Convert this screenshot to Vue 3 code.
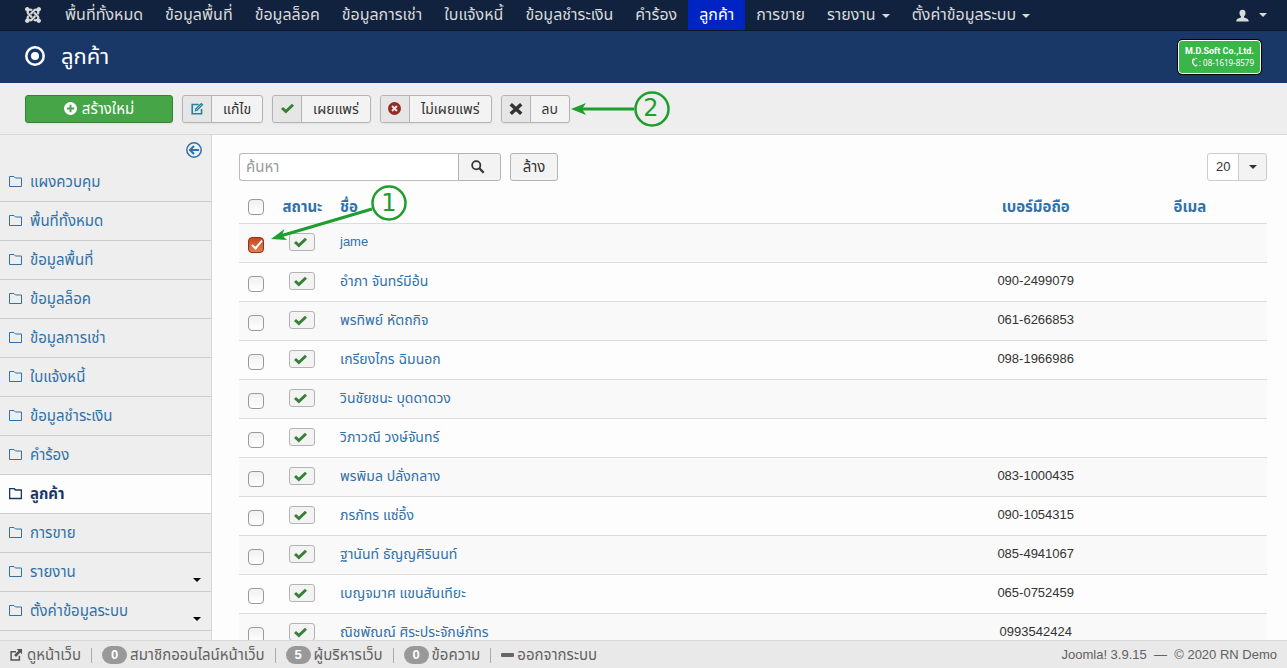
<script setup>
import { ref } from 'vue'

const topItems = ['พื้นที่ทั้งหมด', 'ข้อมูลพื้นที่', 'ข้อมูลล็อค', 'ข้อมูลการเช่า', 'ใบแจ้งหนี้', 'ข้อมูลชำระเงิน', 'คำร้อง', 'ลูกค้า', 'การขาย', 'รายงาน', 'ตั้งค่าข้อมูลระบบ']
const sideItems = ['แผงควบคุม', ...topItems]
const current = 'ลูกค้า'
const withMenu = ['รายงาน', 'ตั้งค่าข้อมูลระบบ']

const search = ref('')
const limit = ref('20')
const rows = ref([
  { name: 'jame', phone: '', checked: true },
  { name: 'อำภา จันทร์มีอ้น', phone: '090-2499079', checked: false },
  { name: 'พรทิพย์ หัตถกิจ', phone: '061-6266853', checked: false },
  { name: 'เกรียงไกร ฉิมนอก', phone: '098-1966986', checked: false },
  { name: 'วินชัยชนะ บุดดาดวง', phone: '', checked: false },
  { name: 'วิภาวณี วงษ์จันทร์', phone: '', checked: false },
  { name: 'พรพิมล ปลั่งกลาง', phone: '083-1000435', checked: false },
  { name: 'ภรภัทร แซ่อึ้ง', phone: '090-1054315', checked: false },
  { name: 'ฐานันท์ ธัญญศิรินนท์', phone: '085-4941067', checked: false },
  { name: 'เบญจมาศ แขนสันเทียะ', phone: '065-0752459', checked: false },
  { name: 'ณิชพัณณ์ ศิระประจักษ์ภัทร', phone: '0993542424', checked: false },
])
const isThai = (s) => /[\u0E00-\u0E7F]/.test(s)
</script>

<template>
  <div class="page">
    <nav class="navbar" aria-label="เมนูหลัก">
      <a href="#" class="brand" aria-label="Joomla">
        <svg viewBox="0 0 24 24" width="16" height="16">
          <path v-for="a in [0, 90, 180, 270]" :key="a" :transform="`rotate(${a} 12 12)`" d="M16.72 14.76L14.22 17.26l-2.37 2.37-.46.47c-1.37 1.36-3.3 1.83-5.05 1.4-.33 1.42-1.6 2.49-3.13 2.49C1.44 23.98 0 22.55 0 20.77c0-1.52 1.06-2.79 2.47-3.12-.45-1.76.02-3.71 1.4-5.08l.18-.18 2.37 2.37-.19.18c-.77.78-.77 2.02 0 2.79.77.78 2.02.78 2.79 0l.46-.47 2.37-2.37 2.5-2.5z" />
        </svg>
      </a>
      <ul class="nav-list">
        <li v-for="t in topItems" :key="t">
          <a href="#" :class="{ active: t === current }">{{ t }}<i v-if="withMenu.includes(t)" class="caret"></i></a>
        </li>
      </ul>
      <button class="user" aria-label="ผู้ใช้">
        <svg viewBox="0 0 16 16" width="13" height="13"><path d="M8 1c2.300 0 3.700 1.500 3.700 3.800 0 1.700-.7 3.300-1.800 4.200v1.200c0 .6 5 1.300 5.600 3.800l.2 1.500H.3l.2-1.500C1.100 11.500 6.100 10.800 6.100 10.200V9C5 8.100 4.300 6.500 4.300 4.800 4.300 2.500 5.700 1 8 1z" /></svg>
        <i class="caret"></i>
      </button>
    </nav>

    <header class="header">
      <svg class="title-icon" viewBox="0 0 20 20" width="20" height="20"><circle cx="10" cy="10" r="8.700" fill="none" stroke="#fff" stroke-width="2.500" /><circle cx="10" cy="10" r="4" fill="#fff" /></svg>
      <h1>ลูกค้า</h1>
      <div class="logo">
        <strong>M.D.Soft Co.,Ltd.</strong>
        <span><svg viewBox="0 0 10 12" width="8" height="10"><path d="M3 2C1 5 2 9 6 11L8 9.500M3 2l2 1.500" fill="none" stroke="#fff" stroke-width="1.500" /><path d="M5 1l3 1" stroke="#fff" /></svg>: 08-1619-8579</span>
      </div>
    </header>

    <div class="toolbar">
      <button class="btn-new">
        <svg viewBox="0 0 16 16" width="13" height="13"><circle cx="8" cy="8" r="8" fill="#fff" /><path d="M8 3.500v9M3.500 8h9" stroke="#46a546" stroke-width="2.400" /></svg>
        สร้างใหม่
      </button>
      <button class="tool">
        <span class="pane"><svg viewBox="0 0 16 16" width="13" height="13"><path d="M9.500 3H1.500v11.500H13V8.500" fill="none" stroke="#2384a1" stroke-width="2" /><path d="M4.500 11.600l.8-3.500L12.600.9l2.600 2.600-7.300 7.300z" fill="#2384a1" /><path d="M6.500 9.500l6-6" stroke="#e6e6e6" stroke-width=".8" /></svg></span>
        <span class="label">แก้ไข</span>
      </button>
      <button class="tool">
        <span class="pane"><svg viewBox="0 0 16 16" width="13" height="13"><path d="M0 8.700L2.500 6l3.500 3.300L13.500 2 16 4.500 6 14.300z" fill="#378137" /></svg></span>
        <span class="label">เผยแพร่</span>
      </button>
      <button class="tool">
        <span class="pane"><svg viewBox="0 0 16 16" width="13" height="13"><circle cx="8" cy="8" r="8" fill="#942a25" /><path d="M5 5l6 6M11 5l-6 6" stroke="#e6e6e6" stroke-width="2.400" /></svg></span>
        <span class="label">ไม่เผยแพร่</span>
      </button>
      <button class="tool">
        <span class="pane"><svg viewBox="0 0 16 16" width="14" height="14"><path d="M2 2.500l12 11M14 2.500l-12 11" stroke="#333" stroke-width="4" /></svg></span>
        <span class="label">ลบ</span>
      </button>
      <svg class="callout callout-delete" width="102" height="38" viewBox="0 0 102 38">
        <path d="M64 19H12" stroke="#1e9e2e" stroke-width="3" />
        <path d="M1 19l15-6-4 6 4 6z" fill="#1e9e2e" />
        <circle cx="82" cy="19" r="16.500" fill="none" stroke="#1e9e2e" stroke-width="2.500" />
        <text x="81" y="26" text-anchor="middle">2</text>
      </svg>
    </div>

    <div class="body">
      <aside class="sidebar">
        <div class="collapse">
          <button aria-label="ซ่อนเมนู">
            <svg viewBox="0 0 16 16" width="16" height="16"><circle cx="8" cy="8" r="7.200" fill="none" stroke="#3071a9" stroke-width="1.500" /><path d="M13 8H4.500M8 4L4 8l4 4" fill="none" stroke="#3071a9" stroke-width="2" /></svg>
          </button>
        </div>
        <ul>
          <li v-for="t in sideItems" :key="t" :class="{ current: t === current }">
            <a href="#">
              <svg viewBox="0 0 13 12" width="13" height="12"><path d="M.5 10.500V.5h4.500l1.500 1.500h6v8.500z" fill="none" stroke="currentColor" :stroke-width="t === current ? 1.6 : 1" /></svg>
              <span>{{ t }}</span>
              <i v-if="withMenu.includes(t)" class="caret"></i>
            </a>
          </li>
        </ul>
      </aside>

      <main class="content">
        <div class="filters">
          <div class="search">
            <input v-model="search" type="text" placeholder="ค้นหา" aria-label="ค้นหา" />
            <button aria-label="เริ่มค้นหา">
              <svg viewBox="0 0 16 16" width="14" height="14"><circle cx="6" cy="6" r="4.700" fill="none" stroke="#333" stroke-width="2" /><path d="M9.500 9.500l5 5" stroke="#333" stroke-width="2.600" /></svg>
            </button>
          </div>
          <button class="clear">ล้าง</button>
          <div class="limit">
            <select v-model="limit" aria-label="จำนวนรายการ"><option>20</option></select>
            <i class="caret"></i>
          </div>
        </div>

        <table>
          <colgroup><col class="c-check" /><col class="c-status" /><col /><col class="c-wide" /><col class="c-wide" /></colgroup>
          <thead>
            <tr>
              <th class="mid"><input type="checkbox" aria-label="เลือกทั้งหมด" /></th>
              <th class="mid"><a href="#">สถานะ</a></th>
              <th><a href="#">ชื่อ</a></th>
              <th class="mid"><a href="#">เบอร์มือถือ</a></th>
              <th class="mid"><a href="#">อีเมล</a></th>
            </tr>
          </thead>
          <tbody>
            <tr v-for="r in rows" :key="r.name">
              <td class="mid"><input v-model="r.checked" type="checkbox" :aria-label="r.name" /></td>
              <td class="mid">
                <button class="state" aria-label="เผยแพร่">
                  <svg viewBox="0 0 16 16" width="13" height="13"><path d="M0 8.700L2.500 6l3.500 3.300L13.500 2 16 4.500 6 14.300z" fill="#378137" /></svg>
                </button>
              </td>
              <td :class="{ thai: isThai(r.name) }"><a href="#">{{ r.name }}</a></td>
              <td class="mid">{{ r.phone }}</td>
              <td></td>
            </tr>
          </tbody>
        </table>

        <svg class="callout callout-check" width="140" height="60" viewBox="0 0 140 60">
          <path d="M102 25L12 51.500" stroke="#1e9e2e" stroke-width="3" />
          <path d="M1 55l13.500-10-2.500 6.500 5 4.500z" fill="#1e9e2e" />
          <circle cx="119" cy="19" r="16.500" fill="none" stroke="#1e9e2e" stroke-width="2.500" />
          <text x="119" y="27" text-anchor="middle">1</text>
        </svg>
      </main>
    </div>

    <footer class="status">
      <a href="#"><svg viewBox="0 0 16 16" width="12" height="12"><path d="M8 3.500H1.500v11h11V9" fill="none" stroke="#555" stroke-width="2" /><path d="M9 0h7v7l-2.300-2.300L8 10.500 5.500 8l5.800-5.700z" fill="#555" /></svg>ดูหน้าเว็บ</a>
      <div class="stat"><b>0</b>สมาชิกออนไลน์หน้าเว็บ</div>
      <div class="stat"><b>5</b>ผู้บริหารเว็บ</div>
      <div class="stat"><b>0</b>ข้อความ</div>
      <a href="#" class="stat"><svg viewBox="0 0 13 4" width="13" height="4"><rect width="13" height="4" rx="1" fill="#666" /></svg>ออกจากระบบ</a>
      <span class="version">Joomla! 3.9.15 &nbsp;—&nbsp; © 2020 RN Demo</span>
    </footer>
  </div>
</template>

<style>
body { margin: 0; background: #fdfdfd; }
</style>

<style scoped>
* { box-sizing: border-box; }
.page {
  display: flex; flex-direction: column; height: 100vh; overflow: hidden;
  font-family: "Liberation Sans", "Noto Sans Thai", sans-serif; font-size: 15px; line-height: 20px; color: #333;
}
a { color: #3071a9; text-decoration: none; }
ul { list-style: none; margin: 0; padding: 0; }
button, input, select { font: inherit; color: inherit; margin: 0; }
button { padding: 0; cursor: pointer; }
svg { display: block; flex: none; }
.caret { display: inline-block; border: 4px solid transparent; border-top-color: currentColor; border-bottom: 0; }

.navbar { display: flex; flex: none; height: 31px; background: #10223e; border-bottom: 1px solid #0b1628; }
.brand { display: flex; align-items: center; padding: 0 13px 0 25px; fill: #d9d9d9; }
.nav-list { display: flex; flex: 1; }
.nav-list a { display: block; height: 30px; padding: 0 11px; font-size: 16px; line-height: 30px; color: #d9d9d9; white-space: nowrap; }
.nav-list a.active { background: #0024c2; color: #fff; }
.nav-list .caret { margin-left: 6px; vertical-align: middle; }
.user { display: flex; align-items: center; gap: 10px; margin-right: 20px; background: none; border: 0; color: #d9d9d9; fill: #d9d9d9; }

.header { display: flex; flex: none; align-items: center; height: 52px; padding: 0 26px 0 25px; background: #1a3867; color: #fff; }
.title-icon { margin-bottom: 3px; }
h1 { flex: 1; margin: 0 0 0 16px; font-size: 22px; font-weight: 400; line-height: 36px; }
.logo {
  display: flex; flex-direction: column; justify-content: center; width: 83px; height: 34px; padding-right: 6px;
  background: #39b54a; border: 1px solid #fff; border-radius: 4px; outline: 1px solid #000;
  font: 8px/12px "Noto Sans", sans-serif; text-align: right; white-space: nowrap;
}
.logo strong { font-family: Roboto, sans-serif; font-size: 9px; }
.logo span { display: flex; justify-content: flex-end; }

.toolbar { position: relative; display: flex; flex: none; align-items: center; gap: 9px; height: 52px; padding: 0 25px; background: #eee; border-bottom: 1px solid #d8d8d8; }
.toolbar button { display: flex; height: 28px; border: 1px solid #b3b3b3; border-radius: 3px; font-size: 14px; line-height: 26px; background: #f3f3f3; box-shadow: 0 1px 2px rgba(0, 0, 0, .05); white-space: nowrap; }
.toolbar .btn-new { align-items: center; justify-content: center; gap: 5px; width: 148px; background: #46a546; border-color: #378137; color: #fff; font-size: 15px; }
.pane { display: flex; align-items: center; justify-content: center; width: 29px; background: #e6e6e6; border-right: 1px solid #b3b3b3; border-radius: 3px 0 0 3px; }
.label { padding: 0 11px; }
.callout { position: absolute; z-index: 2; pointer-events: none; }
.callout text { font: 24px "DejaVu Sans", sans-serif; fill: #1e9e2e; }
.callout-delete { left: 570px; top: 7px; }
.callout-check { left: 270px; top: 49px; }

.body { position: relative; display: flex; flex: 1; min-height: 0; overflow: hidden; }
.sidebar { flex: none; width: 212px; background: #eee; border-right: 1px solid #d8d8d8; }
.collapse { display: flex; justify-content: flex-end; height: 28px; padding: 7px 9px 0; }
.collapse button { height: 16px; border: 0; background: none; }
.sidebar li { border-bottom: 1px solid #ccc; }
.sidebar li a { display: flex; align-items: center; gap: 8px; height: 38px; padding: 0 10px 0 9px; }
.sidebar span { flex: 1; }
.sidebar .caret { color: #000; margin-top: 16px; }
.sidebar .current { background: #fdfdfd; font-weight: 700; }
.sidebar .current a { color: #1a3867; }

.content { flex: 1; min-width: 0; padding: 18px 20px 0 27px; }
.filters { display: flex; gap: 9px; height: 28px; }
.search { display: flex; }
.search input { width: 219px; padding: 0 6px; border: 1px solid #bbb; border-right: 0; border-radius: 3px 0 0 3px; background: #fff; outline: 0; }
.search input::placeholder { color: #999; opacity: 1; }
.search button { display: flex; align-items: center; justify-content: center; width: 43px; padding-right: 4px; border: 1px solid #b3b3b3; border-radius: 0 3px 3px 0; background: #f3f3f3; }
.clear { width: 48px; border: 1px solid #b3b3b3; border-radius: 3px; background: #f3f3f3; }
.limit { display: grid; grid-template-columns: 1fr 29px; align-items: center; width: 60px; margin-left: auto; font-size: 13px; }
.limit select {
  grid-area: 1 / 1 / 2 / 3; height: 28px; padding: 0 8px; appearance: none; border: 1px solid #ccc; border-radius: 3px;
  background: linear-gradient(90deg, #fff 30px, #ccc 30px, #ccc 31px, #f3f3f3 31px); outline: 0;
}
.limit .caret { grid-area: 1 / 2; justify-self: center; pointer-events: none; }

table { width: 100%; border-collapse: collapse; table-layout: fixed; }
.c-check { width: 34px; }
.c-status { width: 59px; }
.c-wide { width: 15%; }
th, td { height: 39px; padding: 8px; text-align: left; vertical-align: top; border-top: 1px solid #ddd; white-space: nowrap; }
td { font-size: 13px; }
.thai { font-size: 14px; }
th { height: 42px; padding-top: 16px; padding-bottom: 6px; border-top: 0; }
.mid { text-align: center; padding-left: 0; padding-right: 0; }
tbody tr:nth-child(odd) { background: #f9f9f9; }
th input, td input {
  position: relative; display: block; width: 16px; height: 16px; margin: 0 auto; appearance: none;
  border: 1px solid #999; border-radius: 4px; background: linear-gradient(#f0f0f0, #fff);
}
th input { margin-top: 2px; }
td input { margin-top: 5px; }
td input:checked { background: linear-gradient(#c9471b, #e57e50); border-color: #8e3516; }
td input:checked::after {
  content: ""; position: absolute; left: 5px; top: 0; width: 4px; height: 9px;
  border: solid #fff; border-width: 0 2px 2px 0; transform: rotate(40deg);
}
.state { display: flex; align-items: center; width: 26px; height: 18px; margin: 1px 0 0 16px; padding-left: 4px; border: 1px solid #b3b3b3; border-radius: 3px; background: #f3f3f3; }

.status { display: flex; flex: none; align-items: center; height: 28px; padding: 0 10px; background: #e9e9e9; border-top: 1px solid #d8d8d8; color: #626262; white-space: nowrap; }
.status a { display: flex; align-items: center; gap: 5px; color: #626262; }
.stat { display: flex; align-items: center; gap: 3px; }
.status a.stat { gap: 3px; }
.stat::before { content: ""; width: 1px; height: 15px; margin: 2px 7px 0 10px; background: #aaa; }
.status b { width: 25px; border-radius: 9px; background: #999; color: #fff; font-size: 13px; line-height: 18px; text-align: center; }
.version { margin-left: auto; font-size: 13px; }
</style>
